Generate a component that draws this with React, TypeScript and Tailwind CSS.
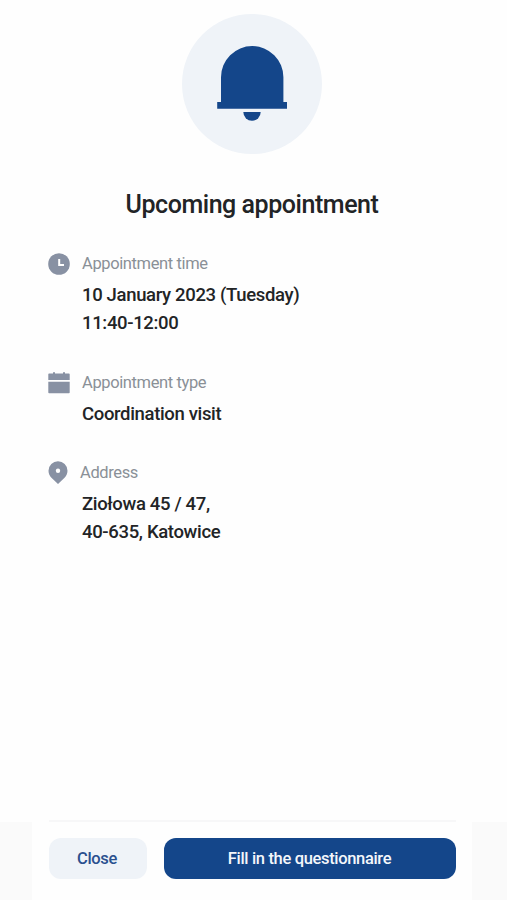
import React from 'react';

function BellIcon() {
    return (
        <svg className="h-[140px] w-[140px]" viewBox="0 0 140 140" fill="currentColor">
            <path d="M39 88V63.2a31.2 31.2 0 0 1 62.4 0V88h3.6v6.8H35.2V88z" />
            <path d="M61.3 98h17.4a8.7 8.7 0 0 1-17.4 0z" />
        </svg>
    );
}

function ClockIcon() {
    return (
        <svg className="h-[22px] w-[22px]" viewBox="0 0 22 22">
            <circle cx="11" cy="11" r="10.8" fill="currentColor" />
            <path d="M11.2 6v6H16" fill="none" stroke="white" strokeWidth="2" />
        </svg>
    );
}

function CalendarIcon() {
    return (
        <svg className="h-[22px] w-[22px]" viewBox="0 0 22 22" fill="currentColor">
            <path d="M.3 8V2.3Q.3 1.5 1.1 1.5H5V.2h2v1.3h8V.2h2v1.3h3.9q.8 0 .8.8V8z" />
            <path d="M.3 9.8h21.4v10.7q0 .8-.8.8H1.1q-.8 0-.8-.8z" />
        </svg>
    );
}

function PinIcon() {
    return (
        <svg className="h-[23px] w-5 -translate-y-px" viewBox="0 0 20 23">
            <path d="M10 .3a9.5 9.5 0 0 1 9.5 9.4c0 3-1.2 5.2-3.2 7.2l-6.3 6-6.3-6c-2-2-3.2-4.2-3.2-7.2A9.5 9.5 0 0 1 10 .3z" fill="currentColor" />
            <circle cx="10" cy="9.7" r="2.2" fill="white" />
        </svg>
    );
}

type DetailProps = {
    icon: React.ReactNode;
    label: string;
    lines: string[];
    className?: string;
};

function Detail({ icon, label, lines, className = '' }: DetailProps) {
    return (
        <div className={className}>
            <div className="flex h-6 items-center gap-3 text-[#8891a3]">
                {icon}
                <span className="text-[16.5px] tracking-[-0.38px] text-[#8a9097]">{label}</span>
            </div>
            <div className="mt-[5px] pl-[34px] text-[18.5px] leading-7 font-medium tracking-[-0.34px] text-[#222426]">
                {lines.map((line) => (
                    <p key={line}>{line}</p>
                ))}
            </div>
        </div>
    );
}

function App() {
    return (
        <div className="flex h-screen flex-col overflow-hidden bg-[#fefefe] font-['Roboto',sans-serif]">
            <main className="flex-1 pt-3.5 pr-[51px] pl-12">
                <div className="mx-auto h-[140px] w-[140px] rounded-full bg-[#eff3f8] text-[#14468a]">
                    <BellIcon />
                </div>
                <h1 className="mt-[35px] text-center text-[25px] leading-8 font-medium tracking-[-0.45px] text-[#222426]">
                    Upcoming appointment
                </h1>
                <Detail
                    className="mt-[31px]"
                    icon={<ClockIcon />}
                    label="Appointment time"
                    lines={['10 January 2023 (Tuesday)', '11:40-12:00']}
                />
                <Detail
                    className="mt-[34px]"
                    icon={<CalendarIcon />}
                    label="Appointment type"
                    lines={['Coordination visit']}
                />
                <Detail
                    className="mt-[33px]"
                    icon={<PinIcon />}
                    label="Address"
                    lines={['Ziołowa 45 / 47,', '40-635, Katowice']}
                />
            </main>
            <footer className="flex h-20">
                <div className="mt-0.5 w-8 bg-[#fafafa]" />
                <div className="flex-1 pr-4 pl-[17px]">
                    <div className="flex gap-[17px] border-t-2 border-[#f7f7f8] pt-4">
                        <button className="h-[41px] w-[98px] rounded-xl bg-[#eff3f8] pt-0.5 pr-0.5 text-[16.5px] font-medium tracking-[-0.34px] text-[#2a508f]">
                            Close
                        </button>
                        <button className="h-[41px] flex-1 rounded-xl bg-[#14468a] pt-0.5 pr-px text-[16.5px] font-medium tracking-[-0.34px] text-[#f4f7fb]">
                            Fill in the questionnaire
                        </button>
                    </div>
                </div>
                <div className="mt-0.5 w-[35px] bg-[#fafafa]" />
            </footer>
        </div>
    );
}

export default App;
